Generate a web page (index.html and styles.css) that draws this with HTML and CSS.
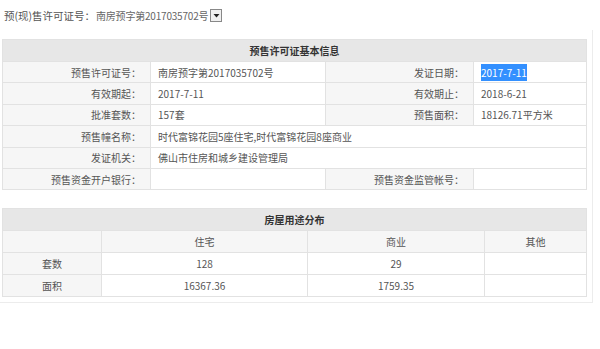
FILE: index.html
```html
<!DOCTYPE html>
<html lang="zh">
<head>
<meta charset="utf-8">
<link rel="stylesheet" href="styles.css">
</head>
<body>
<div class="page">
  <div class="picker">
    <span class="picker-label">预(现)售许可证号：</span>
    <span class="select"><span class="select-text">南房预字第2017035702号</span><span class="select-btn"><svg width="7" height="5" viewBox="0 0 7 5"><path d="M0.5 1h6L3.5 4.5z" fill="#222"/></svg></span></span>
  </div>
  <div class="panel">
    <table class="info">
      <colgroup><col class="c1"><col class="c2"><col class="c3"><col class="c4"></colgroup>
      <tr><th colspan="4" class="head">预售许可证基本信息</th></tr>
      <tr><td class="lab">预售许可证号：</td><td>南房预字第2017035702号</td><td class="lab">发证日期：</td><td><span class="sel">2017-7-11</span></td></tr>
      <tr><td class="lab">有效期起：</td><td>2017-7-11</td><td class="lab">有效期止：</td><td>2018-6-21</td></tr>
      <tr><td class="lab">批准套数：</td><td>157套</td><td class="lab">预售面积：</td><td>18126.71平方米</td></tr>
      <tr><td class="lab">预售幢名称：</td><td colspan="3">时代富锦花园5座住宅,时代富锦花园8座商业</td></tr>
      <tr><td class="lab">发证机关：</td><td colspan="3">佛山市住房和城乡建设管理局</td></tr>
      <tr><td class="lab">预售资金开户银行：</td><td></td><td class="lab">预售资金监管帐号：</td><td></td></tr>
    </table>
    <table class="usage">
      <colgroup><col class="u1"><col class="u2"><col class="u3"><col class="u4"></colgroup>
      <tr><th colspan="4" class="head">房屋用途分布</th></tr>
      <tr class="sub"><td></td><td>住宅</td><td>商业</td><td>其他</td></tr>
      <tr><td class="lab">套数</td><td>128</td><td>29</td><td></td></tr>
      <tr><td class="lab">面积</td><td>16367.36</td><td>1759.35</td><td></td></tr>
    </table>
  </div>
</div>
</body>
</html>
```
FILE: styles.css
```css
html, body { margin: 0; padding: 0; background: #fff; }
body {
  font-family: "Noto Sans CJK SC", "Noto Sans", sans-serif;
  font-size: 10px;
  color: #555;
}
.page { width: 600px; }
.picker {
  display: flex;
  align-items: center;
  height: 30px;
  padding-left: 4px;
  white-space: nowrap;
}
.picker-label { font-size: 10.5px; color: #555; width: 92px; flex: none; }
.select { display: flex; align-items: center; gap: 2px; }
.select-text { font-size: 10px; color: #666; letter-spacing: -0.2px; }
.select-btn {
  display: flex; align-items: center; justify-content: center;
  width: 10px; height: 11px;
  border: 1px solid #888;
  background: #f0f0f0;
}
.panel {
  width: 593px;
  height: 273px;
  padding: 9px 0 0 2px;
  border-right: 1px solid #ececec;
  border-bottom: 1px solid #ececec;
  box-sizing: border-box;
}
table {
  border-collapse: collapse;
  width: 584px;
  table-layout: fixed;
}
td, th {
  border: 1px solid #e2e2e2;
  height: 20px;
  padding: 0 7px;
  white-space: nowrap;
  overflow: hidden;
}
th.head {
  background: #e7e7e7;
  color: #333;
  font-weight: bold;
  height: 21px;
  text-align: center;
}
.info .c1 { width: 148px; }
.info .c2 { width: 175px; }
.info .c3 { width: 148px; }
.info .c4 { width: 113px; }
.info td { background: #fff; height: 20.4px; }
.info td.lab { text-align: right; background: #f6f6f6; padding-right: 9px; }
.sel { background: #3390ff; color: #fff; padding: 1px 0; }
.usage { margin-top: 18px; }
.usage .u1 { width: 99px; }
.usage .u2 { width: 206px; }
.usage .u3 { width: 177px; }
.usage .u4 { width: 102px; }
.usage td { text-align: center; background: #fff; height: 21px; }
.usage td.lab { background: #f6f6f6; }
.usage tr.sub td { background: #f6f6f6; }
```
